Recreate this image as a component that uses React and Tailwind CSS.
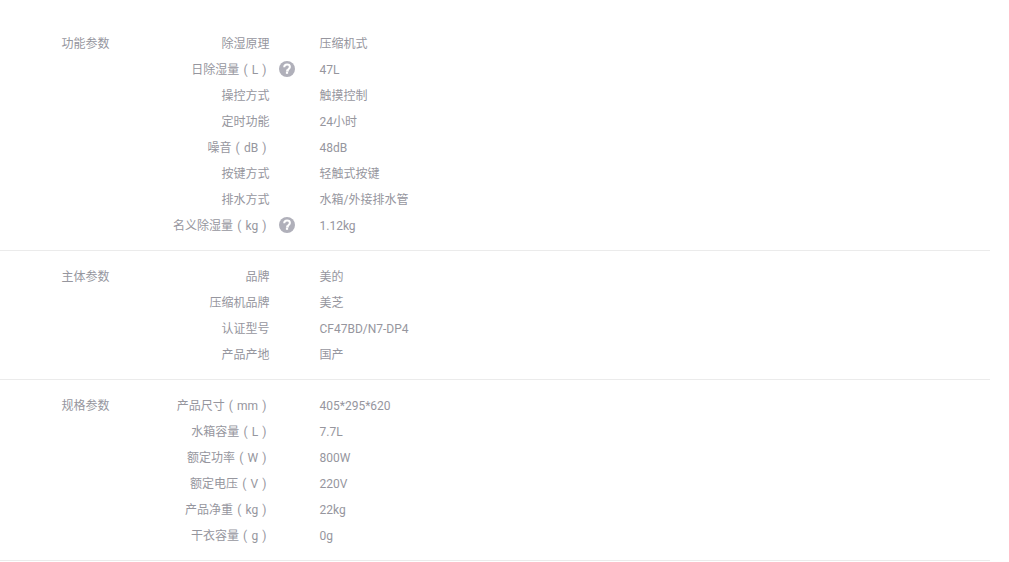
const groups = [
  {
    title: "功能参数",
    rows: [
      ["除湿原理", "压缩机式"],
      ["日除湿量 ( L )", "47L", true],
      ["操控方式", "触摸控制"],
      ["定时功能", "24小时"],
      ["噪音 ( dB )", "48dB"],
      ["按键方式", "轻触式按键"],
      ["排水方式", "水箱/外接排水管"],
      ["名义除湿量 ( kg )", "1.12kg", true],
    ],
  },
  {
    title: "主体参数",
    rows: [
      ["品牌", "美的"],
      ["压缩机品牌", "美芝"],
      ["认证型号", "CF47BD/N7-DP4"],
      ["产品产地", "国产"],
    ],
  },
  {
    title: "规格参数",
    rows: [
      ["产品尺寸 ( mm )", "405*295*620"],
      ["水箱容量 ( L )", "7.7L"],
      ["额定功率 ( W )", "800W"],
      ["额定电压 ( V )", "220V"],
      ["产品净重 ( kg )", "22kg"],
      ["干衣容量 ( g )", "0g"],
    ],
  },
];

function HelpIcon() {
  return (
    <svg width="16" height="16" viewBox="0 0 16 16" className="shrink-0">
      <circle cx="8" cy="8" r="8" fill="#b0b0ba" />
      <path d="M5.2 6.3C5.3 4.5 6.5 3.6 8 3.6c1.7 0 2.9.9 2.9 2.4 0 1.1-.7 1.6-1.4 2.1-.6.4-.7.7-.7 1.5H7.2" fill="none" stroke="#fff" strokeWidth="2" />
      <rect x="6.9" y="10.6" width="2.2" height="2.2" fill="#fff" />
    </svg>
  );
}

export default function App() {
  return (
    <div className="w-[1009px] h-[562px] overflow-hidden bg-white pt-[31px] text-[12px] text-[#96969e] font-['Roboto','Noto_Sans_CJK_SC',sans-serif]">
      {groups.map((group) => (
        <div key={group.title} className="w-[990px] flex border-b border-[#ebebeb] pb-[11px] mb-[13px]">
          <div className="w-[110px] pr-[0.5px] text-right leading-[26px] shrink-0">{group.title}</div>
          <div className="flex-1">
            {group.rows.map(([label, value, help]) => (
              <div key={label} className="flex h-[26px] items-center leading-[26px]">
                <div className={`w-[160px] text-right shrink-0 whitespace-nowrap [word-spacing:1.2px] ${label.includes("(") ? "pr-[3.5px]" : "pr-[0.5px]"}`}>{label}</div>
                <div className="w-[25px] shrink-0 flex justify-end mb-[2px]">{help && <HelpIcon />}</div>
                <div className="ml-[24.5px]">{value}</div>
              </div>
            ))}
          </div>
        </div>
      ))}
    </div>
  );
}
